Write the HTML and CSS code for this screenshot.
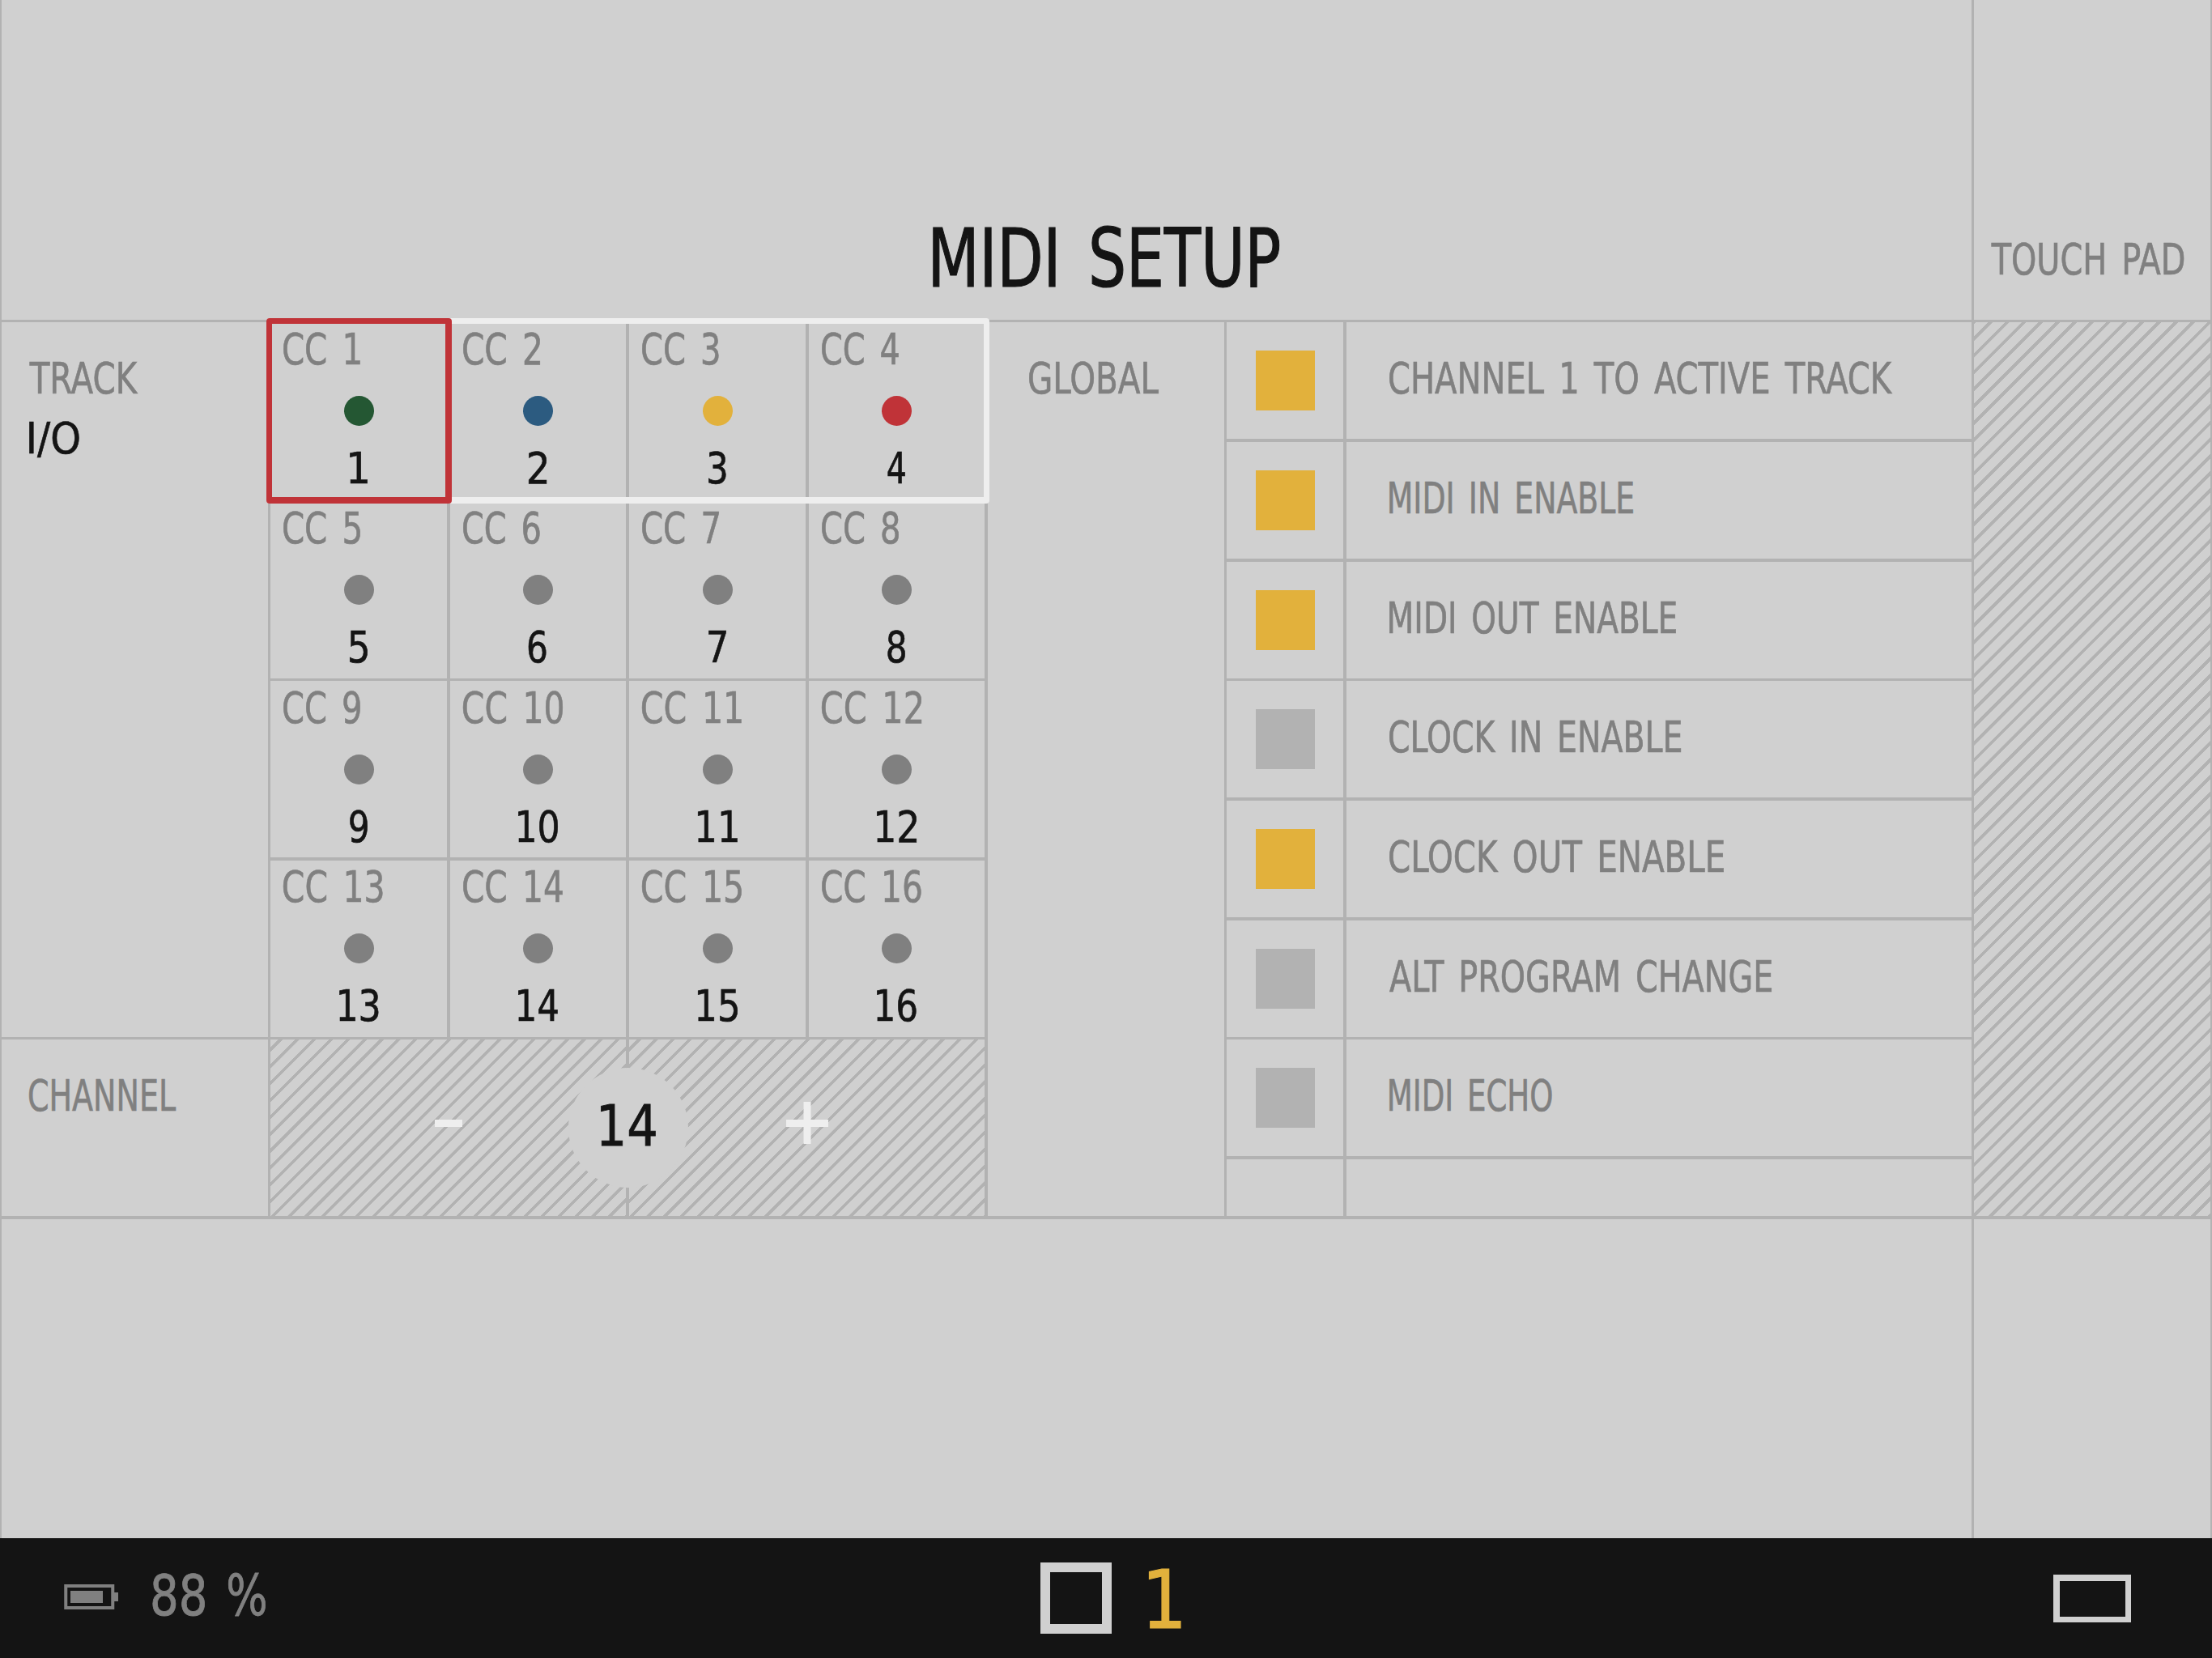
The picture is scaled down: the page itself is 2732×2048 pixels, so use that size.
FILE: index.html
```html
<!DOCTYPE html>
<html lang="en">
<head>
    <meta charset="UTF-8">
    <meta name="viewport" content="width=device-width, initial-scale=1.0">
    <title>MIDI Setup</title>
    <link rel="stylesheet" href="styles.css">
</head>
<body>
    <div class="screen">
        <main class="main">
            <header class="header">
                <h1 class="fit" data-w="428">MIDI SETUP</h1>
            </header>

            <div class="content">
                <section class="tracks">
                    <div class="track-row">
                        <div class="side-label">
                            <span class="fit" data-w="134">TRACK</span>
                            <span class="fit dark" data-w="62">I/O</span>
                        </div>
                        <div class="cc-grid" id="cc-grid">
                            <div class="outline outline-row"></div>
                            <div class="outline outline-cell"></div>
                        </div>
                    </div>
                    <div class="channel-row">
                        <div class="side-label">
                            <span class="fit" data-w="181">CHANNEL</span>
                        </div>
                        <div class="stepper">
                            <div class="step hatch">
                                <svg width="52" height="52" viewBox="0 0 52 52"><path d="M9 26.5H43" stroke="#eee" stroke-width="9"/></svg>
                            </div>
                            <div class="step hatch">
                                <svg width="52" height="52" viewBox="0 0 52 52"><path d="M0 26.5H52M26 0V52" stroke="#eee" stroke-width="9"/></svg>
                            </div>
                            <div class="channel-value"><span class="fit" data-w="68">14</span></div>
                        </div>
                    </div>
                </section>

                <section class="global">
                    <span class="fit" data-w="160">GLOBAL</span>
                </section>

                <section class="options">
                    <div class="option">
                        <div class="check"><i class="box on"></i></div>
                        <span class="fit" data-w="621">CHANNEL 1 TO ACTIVE TRACK</span>
                    </div>
                    <div class="option">
                        <div class="check"><i class="box on"></i></div>
                        <span class="fit" data-w="301">MIDI IN ENABLE</span>
                    </div>
                    <div class="option">
                        <div class="check"><i class="box on"></i></div>
                        <span class="fit" data-w="354">MIDI OUT ENABLE</span>
                    </div>
                    <div class="option">
                        <div class="check"><i class="box"></i></div>
                        <span class="fit" data-w="360">CLOCK IN ENABLE</span>
                    </div>
                    <div class="option">
                        <div class="check"><i class="box on"></i></div>
                        <span class="fit" data-w="413">CLOCK OUT ENABLE</span>
                    </div>
                    <div class="option">
                        <div class="check"><i class="box"></i></div>
                        <span class="fit" data-w="472">ALT PROGRAM CHANGE</span>
                    </div>
                    <div class="option">
                        <div class="check"><i class="box"></i></div>
                        <span class="fit" data-w="201">MIDI ECHO</span>
                    </div>
                    <div class="option">
                        <div class="check"></div>
                    </div>
                </section>
            </div>
        </main>

        <aside class="touchpad">
            <div class="touchpad-title"><span class="fit" data-w="238">TOUCH PAD</span></div>
            <div class="touchpad-area"></div>
        </aside>
    </div>

    <footer class="footer">
        <div class="battery">
            <svg width="68" height="32" viewBox="0 0 68 32">
                <rect x="2.25" y="2" width="58" height="27" fill="none" stroke="#808080" stroke-width="4"/>
                <rect x="8" y="8" width="40" height="15" fill="#808080"/>
                <rect x="61" y="10" width="6" height="11" fill="#808080"/>
            </svg>
            <span class="fit" data-w="65">88</span>
            <span class="fit" data-w="46">%</span>
        </div>
        <div class="pattern">
            <i class="pattern-square"></i>
            <span class="fit" data-w="40">1</span>
        </div>
        <i class="view-button"></i>
    </footer>

    <script src="script.js"></script>
</body>
</html>
```

FILE: styles.css
```css
* {
    box-sizing: border-box;
    margin: 0;
    padding: 0;
}

body {
    width: 2732px;
    height: 2048px;
    overflow: hidden;
    background-color: #d0d0d0;
    color: #808080;
    font-family: "DejaVu Sans Condensed", "DejaVu Sans", sans-serif;
    font-size: 53px;
    line-height: 1;
}

.fit {
    display: block;
    flex: none;
    width: max-content;
    white-space: nowrap;
    word-spacing: 0.12em;
    transform-origin: 0 0;
    -webkit-text-stroke: 0.012em currentColor;
}

.dark {
    color: #141414;
}

.screen {
    display: flex;
    height: 1900px;
}

.main {
    width: 2438px;
    border-left: 2px solid #b2b2b2;
    border-right: 3px solid #b2b2b2;
}

.header {
    display: flex;
    justify-content: center;
    height: 398px;
    padding: 270px 0 0 295px;
    border-bottom: 3px solid #b2b2b2;
}

h1 {
    color: #141414;
    font-size: 99px;
    font-weight: normal;
}

.content {
    display: flex;
    height: 1108px;
    border-bottom: 4px solid #b2b2b2;
}

/* Tracks */
.tracks {
    width: 1218px;
}

.track-row {
    display: flex;
    height: 886px;
    border-bottom: 3px solid #b2b2b2;
}

.channel-row {
    display: flex;
    height: 218px;
}

.side-label {
    display: flex;
    flex-direction: column;
    gap: 21px;
    width: 332px;
    padding: 43px 0 0 34px;
    border-right: 3px solid #b2b2b2;
}

.cc-grid {
    position: relative;
    display: grid;
    grid-template-columns: 222px 221px 222px 221px;
    grid-template-rows: 222px 221px 222px 218px;
}

.cc {
    display: flex;
    flex-direction: column;
    align-items: center;
    padding-top: 7px;
    border-right: 4px solid #b2b2b2;
    border-bottom: 3px solid #b2b2b2;
}

.cc:nth-child(n+5) {
    padding-top: 6px;
}

.cc:nth-child(n+9) {
    padding-top: 7px;
    border-bottom-width: 4px;
}

.cc:nth-child(n+13) {
    padding-top: 6px;
    border-bottom: none;
}

.cc-name {
    align-self: flex-start;
    margin-left: 16px;
}

.dot {
    width: 37px;
    height: 37px;
    margin: 31px 0 26px;
    border-radius: 50%;
    background-color: #808080;
}

.green { background-color: #245733; }
.blue { background-color: #2c5b80; }
.yellow { background-color: #e2b13c; }
.red { background-color: #c03338; }

/* Selection frames over the first row */
.outline {
    position: absolute;
    top: -5px;
    left: -5px;
    height: 229px;
    border: 7px solid #eee;
    border-bottom-width: 8px;
    border-radius: 4px;
}

.outline-row {
    width: 893px;
}

.outline-cell {
    width: 229px;
    border-color: #c03338;
    border-right-width: 8px;
}

/* Channel stepper */
.stepper {
    position: relative;
    display: flex;
    width: 886px;
    border-right: 4px solid #b2b2b2;
}

.step {
    display: flex;
    flex: 1;
    justify-content: center;
    padding-top: 77px;
}

.step:first-child {
    flex: none;
    width: 443px;
    border-right: 4px solid #b2b2b2;
}

.hatch {
    background: repeating-linear-gradient(135deg, transparent 0 6.9px, #b2b2b2 7.1px 10.6px, transparent 10.8px 14.73px);
}

.channel-value {
    position: absolute;
    top: 35px;
    left: 368px;
    display: flex;
    justify-content: center;
    width: 148px;
    height: 148px;
    padding-top: 37px;
    border-radius: 50%;
    background-color: #d0d0d0;
    color: #141414;
    font-size: 70px;
}

/* Global options */
.global {
    width: 292px;
    padding: 43px 0 0 51px;
}

.options {
    display: grid;
    flex: 1;
    grid-template-rows: 148px 148px 147px 148px 148px 147px 148px 70px;
    border-left: 3px solid #b2b2b2;
}

.option {
    display: flex;
    border-bottom: 4px solid #b2b2b2;
}

.option:nth-child(3n) {
    border-bottom-width: 3px;
}

.option:last-child {
    border-bottom: none;
}

.check {
    width: 148px;
    padding: 35px 0 0 36px;
    margin-right: 53px;
    border-right: 4px solid #b2b2b2;
}

.option .fit {
    margin-top: 43px;
}

.box {
    display: block;
    width: 73px;
    height: 74px;
    background-color: #b2b2b2;
}

.box.on {
    background-color: #e2b13c;
}

/* Touch pad */
.touchpad {
    flex: 1;
    border-right: 2px solid #b2b2b2;
}

.touchpad-title {
    height: 398px;
    padding: 294px 0 0 21px;
    border-bottom: 3px solid #b2b2b2;
}

.touchpad-area {
    height: 1108px;
    border-bottom: 4px solid #b2b2b2;
    background: repeating-linear-gradient(135deg, #b2b2b2 0 1.5px, transparent 1.7px 12.2px, #b2b2b2 12.4px 14.73px);
}

/* Bottom bar */
.footer {
    display: flex;
    align-items: flex-start;
    height: 148px;
    padding: 30px 100px 0 79px;
    background-color: #141414;
}

.battery {
    display: flex;
    align-items: flex-start;
    width: 1206px;
    padding-top: 6px;
    font-size: 70px;
}

.battery svg {
    margin: 21px 41px 0 0;
}

.battery .fit + .fit {
    margin-left: 29px;
}

.pattern {
    display: flex;
    color: #e2b13c;
    font-size: 99px;
}

.pattern-square {
    width: 88px;
    height: 88px;
    margin-right: 46px;
    border: 12px solid #d0d0d0;
}

.pattern .fit {
    margin-top: -3px;
}

.view-button {
    width: 96px;
    height: 59px;
    margin: 15px 0 0 auto;
    border: 8px solid #d0d0d0;
    border-right-width: 7px;
    border-bottom-width: 7px;
}
```

FILE: script.js
```js
const grid = document.getElementById('cc-grid');
const frames = grid.querySelectorAll('.outline');
const colors = ['green', 'blue', 'yellow', 'red'];

// Build the 16 CC cells, frames stay after them
for (let i = 1; i <= 16; i++) {
    const cell = document.createElement('div');
    cell.className = 'cc';
    cell.innerHTML = `
        <span class="cc-name fit" data-w="${i < 10 ? 95 : 123}">CC ${i}</span>
        <span class="dot ${colors[i - 1] || ''}"></span>
        <span class="fit dark" data-w="${i < 10 ? 22 : 49}">${i}</span>`;
    grid.insertBefore(cell, frames[0]);
}

// Squeeze each label so its ink is data-w pixels wide.
// Measured at 10x, the canvas rounds glyph bounds to whole pixels.
const ctx = document.createElement('canvas').getContext('2d');

document.querySelectorAll('.fit').forEach(function(el) {
    const style = getComputedStyle(el);
    const target = Number(el.dataset.w);
    const natural = el.offsetWidth;
    ctx.font = `${parseFloat(style.fontSize) * 10}px ${style.fontFamily}`;
    ctx.wordSpacing = `${parseFloat(style.wordSpacing) * 10}px`;
    const m = ctx.measureText(el.textContent);
    const left = m.actualBoundingBoxLeft / 10;
    const scale = target / (m.actualBoundingBoxRight / 10 + left);
    el.style.transform = `scaleX(${scale}) translateX(${left}px)`;
    el.style.marginRight = `${target - natural}px`;
});
```
